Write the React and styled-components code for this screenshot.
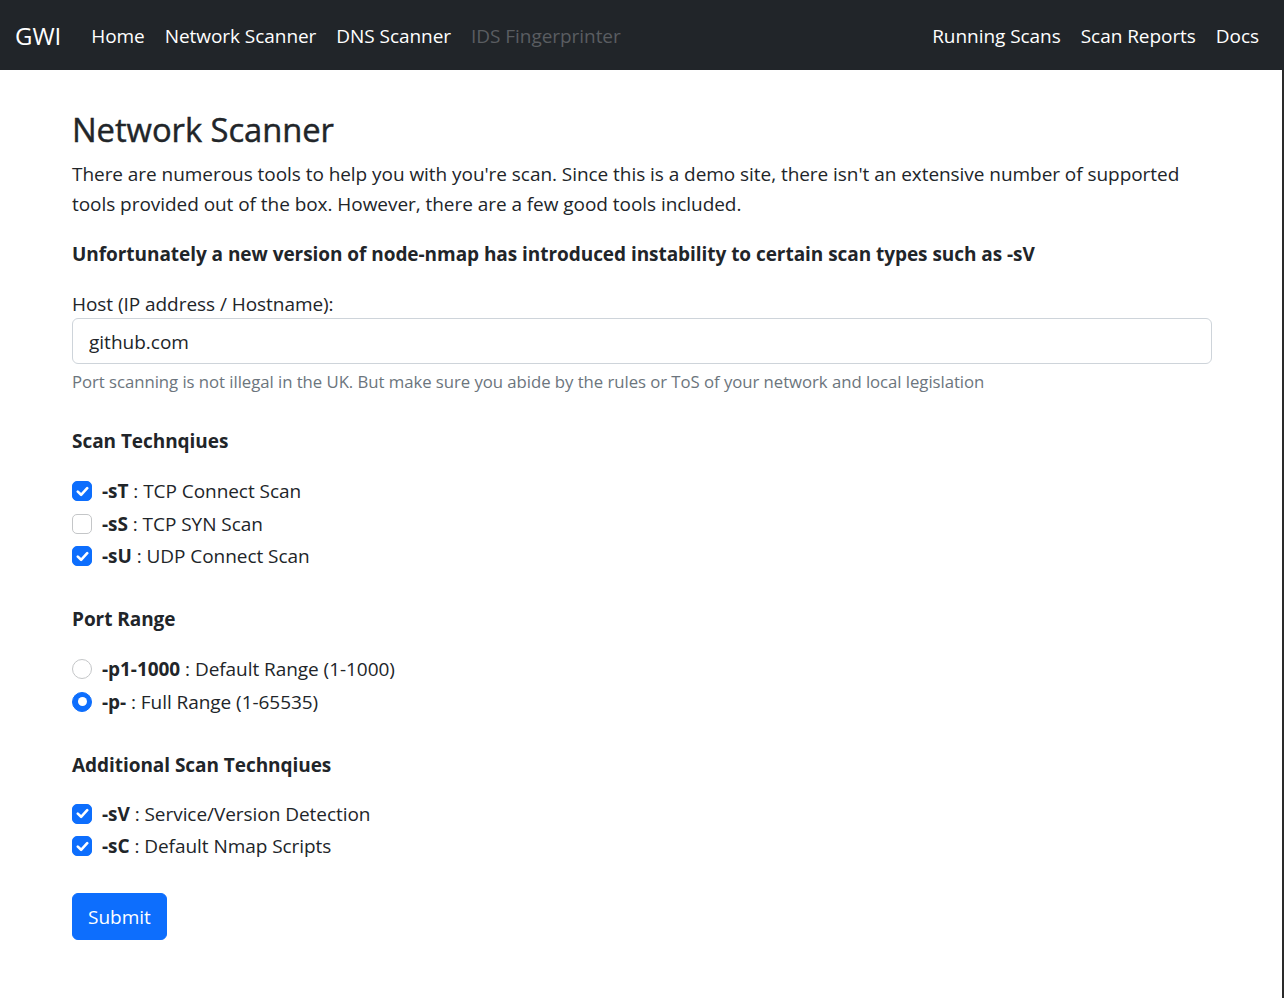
import React from "react";
import styled, { createGlobalStyle } from "styled-components";

const GlobalStyle = createGlobalStyle`
  * { box-sizing: border-box; }
  body {
    margin: 0;
    font-family: "Open Sans", "Noto Sans", sans-serif;
    font-size: 19px;
    letter-spacing: -0.05px;
    line-height: 30px;
    color: #212529;
    background: #fff;
  }
`;

const Page = styled.div`
  min-height: 100vh;
  box-shadow: inset -2px 0 0 #2a2a2a;
`;

const Navbar = styled.nav`
  height: 70px;
  background: #212529;
  display: flex;
  align-items: center;
  padding: 2px 15px 0;
`;

const Brand = styled.a`
  font-size: 24px;
  color: #fff;
  margin-right: 20px;
  text-decoration: none;
`;

const NavList = styled.div`
  display: flex;
  align-items: center;
  margin-left: ${(p) => (p.$right ? "auto" : "0")};
`;

const NavLink = styled.a`
  padding: 0 10px;
  font-size: 19px;
  color: ${(p) => (p.$disabled ? "#5a5d61" : "#fff")};
  text-decoration: none;
`;

const Container = styled.main`
  width: 1140px;
  margin: 0 0 0 72px;
  padding-top: 40px;
  padding-bottom: 58px;
`;

const Title = styled.h1`
  font-size: 32.75px;
  font-weight: 400;
  -webkit-text-stroke: 0.45px #212529;
  line-height: 40px;
  margin: 0 0 9px;
`;

const Lead = styled.p`
  margin: 0 0 20px;
  font-weight: ${(p) => (p.$bold ? 700 : 400)};
`;

const Label = styled.label`
  display: block;
  line-height: 30px;
  margin-bottom: -1px;
`;

const Input = styled.input`
  display: block;
  width: 100%;
  height: 46px;
  padding: 1px 16px 0;
  font: inherit;
  color: #212529;
  border: 1px solid #ced4da;
  border-radius: 6px;
  outline: none;
`;

const Help = styled.div`
  margin-top: 5px;
  font-size: 16.75px;
  line-height: 26px;
  color: #6c757d;
`;

const Section = styled.section`
  margin-top: ${(p) => (p.$first ? "31px" : "33px")};
`;

const SectionTitle = styled.h6`
  margin: 0 0 ${(p) => (p.$tight ? "19px" : "20px")};
  font-size: 19px;
  font-weight: 700;
  line-height: 30px;
`;

const Check = styled.label`
  display: flex;
  align-items: center;
  height: 30px;
  margin-bottom: 2.5px;
`;

const Box = styled.span`
  flex: none;
  width: 20px;
  height: 20px;
  margin-right: 10px;
  display: flex;
  align-items: center;
  justify-content: center;
  border: 1px solid ${(p) => (p.$on ? "#0d6efd" : "#c4c6c8")};
  border-radius: ${(p) => (p.$round ? "50%" : "5px")};
  background: ${(p) => (p.$on ? "#0d6efd" : "#fff")};
`;

const Dot = styled.span`
  width: 9px;
  height: 9px;
  border-radius: 50%;
  background: #fff;
`;

const Flag = styled.b`
  font-weight: 700;
`;

const Button = styled.button`
  margin-top: 29px;
  height: 47px;
  padding: 1px 15px 0;
  font: inherit;
  color: #fff;
  background: #0d6efd;
  border: 1px solid #0d6efd;
  border-radius: 6px;
`;

const Tick = () => (
  <svg width="13" height="11" viewBox="0 0 13 11" fill="none">
    <path d="M1.8 5.6l3.3 3.2 6.1-6.6" stroke="#fff" strokeWidth="2.6" strokeLinecap="round" strokeLinejoin="round" />
  </svg>
);

const Option = ({ flag, text, on, round }) => (
  <Check>
    <Box $on={on} $round={round}>
      {on && (round ? <Dot /> : <Tick />)}
    </Box>
    <span>
      <Flag>{flag}</Flag> : {text}
    </span>
  </Check>
);

export default function App() {
  return (
    <Page>
      <GlobalStyle />
      <Navbar>
        <Brand href="#">GWI</Brand>
        <NavList>
          <NavLink href="#">Home</NavLink>
          <NavLink href="#">Network Scanner</NavLink>
          <NavLink href="#">DNS Scanner</NavLink>
          <NavLink $disabled>IDS Fingerprinter</NavLink>
        </NavList>
        <NavList $right>
          <NavLink href="#">Running Scans</NavLink>
          <NavLink href="#">Scan Reports</NavLink>
          <NavLink href="#">Docs</NavLink>
        </NavList>
      </Navbar>
      <Container>
        <Title>Network Scanner</Title>
        <Lead>
          There are numerous tools to help you with you're scan. Since this is a demo site, there isn't an extensive
          number of supported tools provided out of the box. However, there are a few good tools included.
        </Lead>
        <Lead $bold>
          Unfortunately a new version of node-nmap has introduced instability to certain scan types such as -sV
        </Lead>
        <Label>Host (IP address / Hostname):</Label>
        <Input defaultValue="github.com" />
        <Help>
          Port scanning is not illegal in the UK. But make sure you abide by the rules or ToS of your network and local
          legislation
        </Help>

        <Section $first>
          <SectionTitle>Scan Technqiues</SectionTitle>
          <Option flag="-sT" text="TCP Connect Scan" on />
          <Option flag="-sS" text="TCP SYN Scan" />
          <Option flag="-sU" text="UDP Connect Scan" on />
        </Section>

        <Section>
          <SectionTitle>Port Range</SectionTitle>
          <Option flag="-p1-1000" text="Default Range (1-1000)" round />
          <Option flag="-p-" text="Full Range (1-65535)" round on />
        </Section>

        <Section>
          <SectionTitle $tight>Additional Scan Technqiues</SectionTitle>
          <Option flag="-sV" text="Service/Version Detection" on />
          <Option flag="-sC" text="Default Nmap Scripts" on />
        </Section>

        <Button>Submit</Button>
      </Container>
    </Page>
  );
}
